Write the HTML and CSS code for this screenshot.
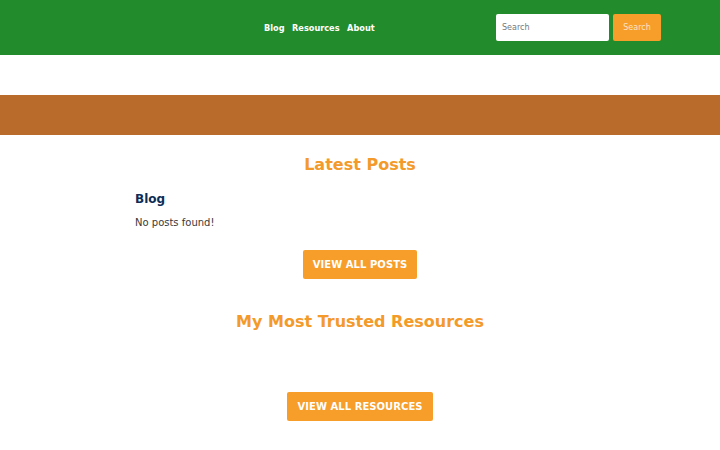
FILE: index.html
```html
<!DOCTYPE html>
<html lang="en">
<head>
<meta charset="utf-8">
<title>Home</title>
<link rel="stylesheet" href="styles.css">
</head>
<body>
<header class="site-header">
  <div class="header-inner">
    <nav class="main-nav">
      <a href="#">Blog</a>
      <a href="#">Resources</a>
      <a href="#">About</a>
    </nav>
    <form class="search-form">
      <input class="search-input" type="text" placeholder="Search">
      <button class="search-btn" type="button">Search</button>
    </form>
  </div>
</header>
<div class="spacer"></div>
<div class="banner"></div>
<main class="content">
  <section class="posts">
    <h2 class="section-title">Latest Posts</h2>
    <h3 class="category">Blog</h3>
    <p class="empty">No posts found!</p>
    <div class="cta"><a class="btn" href="#">View all posts</a></div>
  </section>
  <section class="resources">
    <h2 class="section-title">My Most Trusted Resources</h2>
    <div class="cta cta-res"><a class="btn" href="#">View all resources</a></div>
  </section>
</main>
</body>
</html>
```

FILE: styles.css
```css
* { box-sizing: border-box; }
html, body { margin: 0; padding: 0; }
body {
  font-family: "DejaVu Sans", Verdana, sans-serif;
  background: #ffffff;
  color: #3a3a3a;
}
.site-header {
  background: #228b2b;
  height: 55px;
}
.header-inner {
  height: 55px;
  display: flex;
  align-items: center;
  padding: 0 59px 0 264px;
}
.main-nav {
  display: flex;
  gap: 7.5px;
  flex: 1;
}
.main-nav a {
  color: #ffffff;
  text-decoration: none;
  font-weight: bold;
  font-size: 8.2px;
}
.search-form {
  display: flex;
  gap: 4px;
  margin: 0;
}
.search-input {
  width: 113px;
  height: 27px;
  border: none;
  border-radius: 2px;
  padding: 0 6px;
  font-family: inherit;
  font-size: 8px;
  color: #333;
  background: #fff;
}
.search-input::placeholder { color: #777; }
.search-btn {
  width: 48px;
  height: 27px;
  border: none;
  border-radius: 2px;
  background: #f79d2a;
  color: #f7e4c6;
  font-family: inherit;
  font-size: 8px;
  padding: 0;
}
.spacer { height: 40px; }
.banner {
  height: 40px;
  background: #b86b2b;
}
.content {
  width: 450px;
  margin: 0 auto;
}
.section-title {
  text-align: center;
  color: #f39a2a;
  font-size: 16px;
  line-height: 20px;
  font-weight: bold;
  margin: 0;
}
.posts .section-title { margin-top: 20px; }
.category {
  color: #0c2d57;
  font-size: 12px;
  line-height: 16px;
  font-weight: bold;
  margin: 16px 0 0;
}
.empty {
  font-size: 10px;
  line-height: 14px;
  margin: 9px 0 0;
}
.cta {
  display: flex;
  justify-content: center;
  margin-top: 20px;
}
.btn {
  display: inline-block;
  background: #f79d2a;
  color: #ffffff;
  text-transform: uppercase;
  font-weight: bold;
  font-size: 10px;
  letter-spacing: 0.05px;
  text-decoration: none;
  padding: 8px 10px;
  line-height: 13px;
  border-radius: 2px;
}
.resources .section-title { margin-top: 33px; }
.cta-res { margin-top: 60px; }
```
